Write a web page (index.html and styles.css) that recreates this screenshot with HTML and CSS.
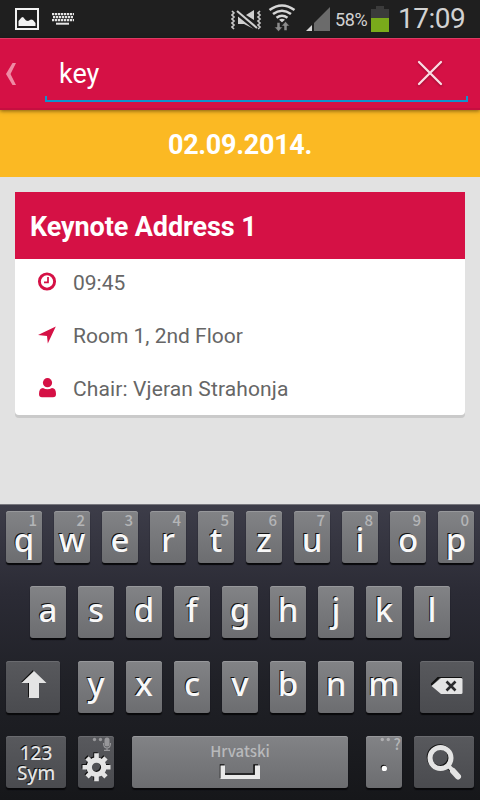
FILE: index.html
```html
<!DOCTYPE html>
<html lang="en">
<head>
    <meta charset="UTF-8">
    <meta name="viewport" content="width=device-width, initial-scale=1.0">
    <link rel="stylesheet" href="styles.css">
    <title>Schedule Search</title>
</head>
<body>
    <div class="status-bar">
        <svg class="icon-picture" width="24" height="22" viewBox="0 0 24 22">
            <rect x="1" y="1" width="22" height="20" fill="none" stroke="#f2f2f2" stroke-width="2"/>
            <path d="M3.500 18v-5l3-3.500 1.500-.5 3 3.500 2 .5 3-1.500 2 .5 2.500 3v3z" fill="#f2f2f2"/>
        </svg>
        <svg class="icon-keyboard" width="22" height="12" viewBox="0 0 22 12">
            <path d="M0 1.200h22M1 4.200h20M0 7.200h22" stroke="#e4e4e4" stroke-width="2.200" stroke-dasharray="2.300 .7"/>
            <path d="M4 10.700h13" stroke="#e4e4e4" stroke-width="2"/>
        </svg>
        <div class="status-right">
            <svg class="icon-mute" width="32" height="22" viewBox="0 0 32 22">
                <path d="M1 2l2 2-2 2 2 2-2 2 2 2-2 2 2 2-2 2 2 2M29 2l-2 2 2 2-2 2 2 2-2 2 2 2-2 2 2 2-2 2" fill="none" stroke="#c8c8c8" stroke-width="1.700"/>
                <path d="M7 6v9h6l10 5V17L9 6zM15 6l8-5v10z" fill="#d0d0d0"/>
                <path d="M5 3l21 17" stroke="#1f1f1f" stroke-width="4.500"/>
                <path d="M6 2l20 17" stroke="#d0d0d0" stroke-width="2"/>
            </svg>
            <svg class="icon-wifi" width="28" height="28" viewBox="0 0 28 28">
                <g fill="none" stroke="#d6d6d6" stroke-width="2.600">
                    <path d="M1.500 6q12.500-9 25 0M5 10q9-6.500 18 0M8.500 13.700q5.500-3.800 11 0"/>
                </g>
                <path d="M11 15.700q3-1.700 6 0L14 18.300z" fill="#d6d6d6"/>
                <path d="M9 18.500h3V23h2.500l-4 4.500-4-4.500H9zM16 26.500V22h-2.500l4-4.500 4 4.500H19v4.500z" fill="#8c8c8c" stroke="#1f1f1f" stroke-width=".5"/>
            </svg>
            <svg class="icon-signal" width="24" height="24" viewBox="0 0 24 24">
                <path d="M24 0v24H8V16z" fill="#6b6b6b"/>
                <path d="M6 18v6H0z" fill="#d6d6d6"/>
            </svg>
            <span class="battery-level">58%</span>
            <svg class="icon-battery" width="18" height="26" viewBox="0 0 18 26">
                <path d="M0 3h5V0h8v3h5v9H0z" fill="#3b3b3b"/>
                <path d="M0 12h18v14H0z" fill="#7aab1b"/>
            </svg>
            <span class="clock">17:09</span>
        </div>
    </div>

    <div class="search-bar">
        <svg class="icon-back" width="12" height="22" viewBox="0 0 12 22">
            <path d="M6.500 0H10L4.500 11 10 22H6.500L0 11z" fill="#ef8ba4"/>
        </svg>
        <div class="search-field">
            <span class="search-text">key</span>
            <svg class="icon-clear" width="26" height="26" viewBox="0 0 26 26">
                <path d="M2 2l22 22M24 2L2 24" stroke="#fbdbe3" stroke-width="2.300" stroke-linecap="round"/>
            </svg>
        </div>
    </div>

    <div class="date-bar"><span>02.09.2014.</span></div>

    <div class="content">
        <div class="card">
            <h2><span>Keynote Address 1</span></h2>
            <div class="info">
                <svg width="20" height="20" viewBox="0 0 20 20">
                    <circle cx="10" cy="9.500" r="7.600" fill="none" stroke="#d51145" stroke-width="2.900"/>
                    <path d="M11 5v5.300H7" fill="none" stroke="#d51145" stroke-width="1.700"/>
                </svg>
                <span class="time">09:45</span>
            </div>
            <div class="info">
                <svg width="20" height="20" viewBox="0 0 20 20">
                    <path d="M18.800 1.500L10.800 18.500 10 11 1 10z" fill="#d51145"/>
                </svg>
                <span class="room">Room 1, 2nd Floor</span>
            </div>
            <div class="info">
                <svg width="20" height="20" viewBox="0 0 20 20">
                    <circle cx="10.500" cy="4.700" r="4.600" fill="#d51145"/>
                    <path d="M6 10q4.500 2.500 9 0 4 0 4 6 0 3.300-3 3.300H5q-3 0-3-3.300 0-6 4-6z" fill="#d51145"/>
                </svg>
                <span class="chair">Chair: Vjeran Strahonja</span>
            </div>
        </div>
    </div>

    <div class="keyboard">
        <div class="row row-top">
            <div class="key">q<sup>1</sup></div>
            <div class="key">w<sup>2</sup></div>
            <div class="key">e<sup>3</sup></div>
            <div class="key">r<sup>4</sup></div>
            <div class="key">t<sup>5</sup></div>
            <div class="key">z<sup>6</sup></div>
            <div class="key">u<sup>7</sup></div>
            <div class="key">i<sup>8</sup></div>
            <div class="key">o<sup>9</sup></div>
            <div class="key">p<sup>0</sup></div>
        </div>
        <div class="row row-middle">
            <div class="key">a</div>
            <div class="key">s</div>
            <div class="key">d</div>
            <div class="key">f</div>
            <div class="key">g</div>
            <div class="key">h</div>
            <div class="key">j</div>
            <div class="key">k</div>
            <div class="key">l</div>
        </div>
        <div class="row row-bottom">
            <div class="key dark shift">
                <svg width="26" height="28" viewBox="0 0 26 28">
                    <path d="M12 0L0 12h7v15h10" fill="#111"/>
                    <path d="M13 1l12.500 12H18v15H8V13H.5z" fill="#e4e4e4"/>
                </svg>
            </div>
            <div class="key">y</div>
            <div class="key">x</div>
            <div class="key">c</div>
            <div class="key">v</div>
            <div class="key">b</div>
            <div class="key">n</div>
            <div class="key">m</div>
            <div class="key dark backspace">
                <svg width="32" height="18" viewBox="0 0 32 18">
                    <path d="M0 8L8 0h23" fill="none" stroke="#111" stroke-width="2"/>
                    <path d="M.5 9L10 1h20q1.500 0 1.500 1.500v13q0 1.500-1.500 1.500H10z" fill="#e4e4e4"/>
                    <path d="M15.500 4.500l9 9M24.500 4.500l-9 9" stroke="#2b2b2d" stroke-width="2.600"/>
                </svg>
            </div>
        </div>
        <div class="row row-space">
            <div class="key dark sym"><span>123</span><span>Sym</span></div>
            <div class="key dark settings">
                <svg width="36" height="52" viewBox="0 0 36 52">
                    <g fill="#97979a">
                        <circle cx="16.500" cy="3.500" r="1.700"/>
                        <circle cx="22.500" cy="3.500" r="1.700"/>
                        <rect x="26.500" y="1.500" width="5" height="9" rx="2.500"/>
                    </g>
                    <path d="M25.500 7q0 5 3.500 5t3.500-5M29 12v2M26 14.300h6" fill="none" stroke="#97979a" stroke-width="1.200"/>
                    <g transform="translate(17.500 30.300)" stroke="#111">
                        <circle r="7.300" fill="none" stroke-width="5.400"/>
                        <path d="M0-14V-8M0 14V8M-14 0H-8M14 0H8M-9.500-9.500L-6-6M9.500 9.500L6 6M-9.500 9.500L-6 6M9.500-9.500L6-6" stroke-width="4.400"/>
                    </g>
                    <g transform="translate(18.500 31.300)" stroke="#e4e4e4">
                        <circle r="7.300" fill="none" stroke-width="5.400"/>
                        <path d="M0-14V-8M0 14V8M-14 0H-8M14 0H8M-9.500-9.500L-6-6M9.500 9.500L6 6M-9.500 9.500L-6 6M9.500-9.500L6-6" stroke-width="4.600"/>
                    </g>
                </svg>
            </div>
            <div class="key space">
                <span>Hrvatski</span>
                <svg width="42" height="16" viewBox="0 0 42 16">
                    <path d="M1.500 14V1h4M6 10h29V1h4" fill="none" stroke="#111" stroke-width="1.500"/>
                    <path d="M1.500 1.500H6V11h30V1.500h5V15H1.500z" fill="#e9e9e9"/>
                </svg>
            </div>
            <div class="key period">
                <svg width="36" height="52" viewBox="0 0 36 52">
                    <circle cx="16.300" cy="3.500" r="1.700" fill="#aeaeb0"/>
                    <circle cx="22.300" cy="3.500" r="1.700" fill="#aeaeb0"/>
                    <circle cx="17.600" cy="31.600" r="2.800" fill="#111"/>
                    <circle cx="18.300" cy="32.400" r="2.700" fill="#fff"/>
                </svg>
                <sup>?</sup>
            </div>
            <div class="key dark search">
                <svg width="38" height="38" viewBox="0 0 38 38">
                    <g fill="none" stroke="#111">
                        <circle cx="14.700" cy="14.200" r="10.500" stroke-width="5"/>
                        <path d="M22 22l11 11" stroke-width="5"/>
                    </g>
                    <g fill="none" stroke="#e4e4e4">
                        <circle cx="15.500" cy="15" r="10.500" stroke-width="5"/>
                        <path d="M22.500 22l6 6" stroke-width="4"/>
                        <path d="M28 28l5 5.500" stroke-width="6" stroke-linecap="round"/>
                    </g>
                </svg>
            </div>
        </div>
    </div>
</body>
</html>
```

FILE: styles.css
```css
* {
    box-sizing: border-box;
}

body {
    margin: 0;
    width: 480px;
    height: 800px;
    display: flex;
    flex-direction: column;
    background-color: #e2e2e2;
    font-family: Roboto, sans-serif;
    overflow: hidden;
}

svg {
    display: block;
    flex-shrink: 0;
}

.status-bar {
    height: 38px;
    flex-shrink: 0;
    display: flex;
    align-items: flex-start;
    padding-left: 15px;
    background-color: #1f1f1f;
    color: #d2d2d2;
}

.icon-picture {
    margin-top: 8px;
}

.icon-keyboard {
    margin: 13px 0 0 13px;
}

.status-right {
    display: flex;
    align-items: flex-start;
    margin-left: 157px;
}

.icon-mute {
    margin-top: 9px;
}

.icon-wifi {
    margin: 4px 0 0 5px;
}

.icon-signal {
    margin: 7px 0 0 10px;
}

.battery-level {
    width: 35px;
    margin-left: 5px;
    font-size: 18px;
    line-height: 40px;
    letter-spacing: -0.4px;
}

.icon-battery {
    margin: 6px 0 0 1px;
}

.clock {
    margin-left: 9px;
    font-size: 28px;
    line-height: 37px;
    letter-spacing: -0.5px;
}

.search-bar {
    position: relative;
    height: 72px;
    flex-shrink: 0;
    display: flex;
    padding-left: 6px;
    background-color: #d51145;
    border-top: 1px solid #dd3a62;
    border-bottom: 2px solid #c50f40;
    box-shadow: 0 1px 4px rgba(0, 0, 0, 0.5);
}

.icon-back {
    margin: 24px 27px 0 0;
}

.search-field {
    width: 423px;
    height: 63px;
    display: flex;
    justify-content: space-between;
    padding: 0 25px 0 14px;
    background: linear-gradient(#0f93cd, #0f93cd) left bottom / 2px 6px no-repeat,
        linear-gradient(#0f93cd, #0f93cd) right bottom / 2px 6px no-repeat,
        linear-gradient(#0f93cd, #0f93cd) left bottom / 100% 2px no-repeat;
}

.search-text {
    color: #fff;
    font-size: 27px;
    line-height: 70px;
}

.icon-clear {
    margin-top: 21px;
    filter: drop-shadow(0 1px 1px rgba(80, 0, 20, 0.5));
}

.date-bar {
    height: 67px;
    flex-shrink: 0;
    background-color: #fbb923;
    color: #fff;
    font-size: 27px;
    font-weight: bold;
    line-height: 71px;
    letter-spacing: -0.3px;
    text-align: center;
}

.content {
    flex: 1;
    padding: 15px;
}

.card {
    height: 223px;
    background-color: #fff;
    border-radius: 0 0 4px 4px;
    box-shadow: 0 3px 0 #cacaca;
}

.card h2 {
    height: 67px;
    margin: 0;
    padding-left: 15px;
    background-color: #d51145;
    color: #fff;
    font-size: 27px;
    line-height: 71px;
    letter-spacing: -0.1px;
}

.info {
    height: 53px;
    display: flex;
    align-items: flex-start;
    gap: 16px;
    padding-left: 22px;
    color: #666;
    font-size: 21px;
    line-height: 49px;
}

.info svg {
    margin-top: 13px;
}

.chair {
    letter-spacing: 0.12px;
}

.keyboard {
    height: 296px;
    flex-shrink: 0;
    display: flex;
    flex-direction: column;
    gap: 23px;
    padding: 6px 6px 0;
    background: linear-gradient(#3d3d49, #2b2b35 30%, #202127 60%, #16171a);
    border-top: 1px solid #77777e;
    font-family: "Noto Sans", sans-serif;
}

.row {
    height: 52px;
    display: flex;
    gap: 12px;
}

.row-middle {
    padding-left: 24px;
}

.key {
    position: relative;
    width: 36px;
    height: 52px;
    background: linear-gradient(#828386, #6c6d70);
    border-radius: 3px;
    box-shadow: 0 2px 1px #08080a, inset 0 1px 0 #97989b;
    color: #f8f8f8;
    font-size: 33px;
    font-weight: 500;
    line-height: 47px;
    text-align: center;
    text-shadow: -1px -1px 0 #111;
}

.row-top .key {
    line-height: 58px;
}

.row-bottom .key {
    line-height: 46px;
}

.key sup {
    position: absolute;
    top: 0;
    right: 5px;
    color: #b4b5b7;
    font-family: "Noto Sans CJK SC", sans-serif;
    font-size: 15px;
    line-height: 17px;
    text-shadow: none;
}

.dark {
    background: linear-gradient(#58595d, #4a4b4f);
    box-shadow: 0 2px 1px #08080a, inset 0 1px 0 #6a6b6f;
}

.shift,
.backspace {
    width: 54px;
}

.shift {
    margin-right: 6px;
}

.backspace {
    margin-left: 6px;
}

.shift svg {
    margin: 9px 0 0 15px;
}

.backspace svg {
    margin: 16px 0 0 11px;
}

.key.sym {
    width: 60px;
    display: flex;
    flex-direction: column;
    padding-top: 7px;
    color: #e4e4e4;
    font-size: 19px;
    line-height: 20px;
    letter-spacing: -0.1px;
}

.space {
    width: 216px;
    margin: 0 6px;
}

.space span {
    display: block;
    color: #b8b9bb;
    font-family: "Noto Sans CJK SC", sans-serif;
    font-size: 15px;
    line-height: 29px;
    text-shadow: none;
}

.space svg {
    margin: -1px 0 0 87px;
}

.period sup {
    right: 1px;
    top: -1px;
}

.search {
    width: 60px;
}

.search svg {
    margin: 7px 0 0 11px;
}
```
